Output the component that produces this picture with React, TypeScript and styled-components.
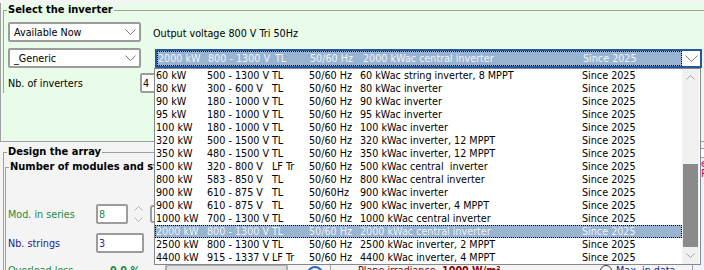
import styled, { createGlobalStyle } from "styled-components";

const GlobalStyle = createGlobalStyle`
    body {
        margin: 0;
        background: #f0f0f0;
        font-family: "DejaVu Sans Condensed", "Liberation Sans", Arial, sans-serif;
        font-size: 10.7px;
        color: #000;
    }
`;

const Screen = styled.div`
    position: relative;
    width: 704px;
    height: 270px;
    overflow: hidden;
    background: #f4f4f4;
`;

const TopPanel = styled.div`
    margin-top: 3px;
    height: 138px;
    padding-left: 2px;
    background: #e9fbe9;
    border-left: 1px solid #a0a0a0;
    border-bottom: 1px solid #a0a0a0;
`;

const Group = styled.fieldset<{ $width?: number }>`
    flex-shrink: 0;
    min-width: 0;
    width: ${(props) => (props.$width ? `${props.$width}px` : "auto")};
    box-sizing: border-box;
    margin: 0;
    padding: 0;
    border: none;
    border-top: 1px solid #a0a0a0;
    border-left: 1px solid #a0a0a0;
`;

const Legend = styled.legend`
    margin-left: 3px;
    padding: 0 1px;
    font-size: 11px;
    line-height: 14px;
    font-weight: bold;
    white-space: nowrap;
`;

const GroupBody = styled.div<{ $pad: string }>`
    padding: ${(props) => props.$pad};
`;

const Row = styled.div<{ $top?: number }>`
    display: flex;
    align-items: flex-start;
    margin-top: ${(props) => props.$top ?? 0}px;
`;

const Combo = styled.div<{ $width: number }>`
    box-sizing: border-box;
    display: flex;
    align-items: center;
    justify-content: space-between;
    width: ${(props) => props.$width}px;
    height: 20px;
    padding: 0 3px 0 4px;
    background: #fff;
    border: 2px solid #9c9c9c;
    border-radius: 2px;
`;

const Caption = styled.span`
    margin: 5px 0 0 12px;
    line-height: 13px;
    white-space: nowrap;
`;

const InverterCombo = styled.div`
    box-sizing: border-box;
    display: flex;
    width: 547px;
    height: 19px;
    margin: 1px 0 0 14px;
    background: #fff;
    border: 2px solid #25579f;
`;

const Selection = styled.div`
    flex: 1;
    box-sizing: border-box;
    background: #99b4d1;
    border: 1px dotted #000;
    color: #eef3f9;
    line-height: 13px;
`;

const ArrowCell = styled.div`
    display: flex;
    align-items: center;
    justify-content: center;
    width: 18px;
`;

const ItemGrid = styled.div<{ $cols: string }>`
    display: grid;
    grid-template-columns: ${(props) => props.$cols};
    white-space: pre;
`;

const FieldRow = styled.div<{ $top?: number; $height?: number; $align?: string }>`
    display: flex;
    align-items: ${(props) => props.$align ?? "center"};
    height: ${(props) => props.$height ?? 20}px;
    margin-top: ${(props) => props.$top ?? 0}px;
`;

const FieldLabel = styled.span<{ $width: number; $color?: string; $bold?: boolean }>`
    flex-shrink: 0;
    width: ${(props) => props.$width}px;
    color: ${(props) => props.$color ?? "#000"};
    font-weight: ${(props) => (props.$bold ? "bold" : "normal")};
    line-height: 13px;
    white-space: nowrap;
`;

const Edit = styled.div<{ $width: number; $color?: string }>`
    box-sizing: border-box;
    display: flex;
    align-items: center;
    flex-shrink: 0;
    width: ${(props) => props.$width}px;
    height: 20px;
    padding-left: 1px;
    color: ${(props) => props.$color ?? "#000"};
    background: #fff;
    border: 2px solid #9c9c9c;
    border-radius: 2px;
`;

const Spinner = styled.div`
    display: flex;
    flex-direction: column;
    align-items: center;
    justify-content: space-between;
    width: 11px;
    height: 16px;
    margin-left: 5px;
`;

const StubBox = styled.div`
    width: 60px;
    height: 14px;
    margin-left: 6px;
    background: #fff;
    border: 2px solid #9c9c9c;
    border-radius: 3px;
`;

const BottomPanel = styled.div`
    display: flex;
    gap: 3px;
    padding: 3px 0 0 3px;
`;

const DesignRow = styled.div`
    display: flex;
`;

const SidePanel = styled.div`
    flex: 1;
    display: flex;
    flex-direction: column;
    justify-content: flex-end;
    margin-left: 3px;
    padding-bottom: 13px;
    border-left: 1px solid #a0a0a0;
`;

const IrradianceRow = styled.div`
    display: flex;
    align-items: flex-start;
    height: 13px;
    padding-left: 27px;
`;

const Radio = styled.span`
    box-sizing: border-box;
    width: 12px;
    height: 12px;
    margin: 1px 4px 0 0;
    background: #fff;
    border: 1px solid #333;
    border-radius: 50%;
`;

const SizeButton = styled.div`
    box-sizing: border-box;
    width: 123px;
    height: 22px;
    background: #e1e1e1;
    border: 2px solid #adadad;
    border-radius: 3px;
`;

const HelpIcon = styled.div`
    box-sizing: border-box;
    width: 16px;
    height: 16px;
    margin: 2px 0 0 19px;
    border: 2px solid #2a64c5;
    border-radius: 50%;
`;

const RightPanel = styled.div`
    flex-shrink: 0;
    width: 200px;
    margin-top: 3px;
    background: #fff;
    border: 1px solid #a0a0a0;
`;

const PanelHead = styled.div`
    height: 8px;
    border-bottom: 1px solid #a0a0a0;
`;

const MessageBox = styled.div`
    height: 120px;
    padding: 1px 0 0 8px;
    background: #eef2fb;
    color: #e8003c;
    line-height: 10px;
    white-space: nowrap;
`;

const DropList = styled.div`
    position: absolute;
    top: 68px;
    left: 154px;
    display: flex;
    box-sizing: border-box;
    width: 547px;
    height: 197px;
    background: #fff;
    border: 1px solid #828790;
`;

const Items = styled.div`
    flex: 1;
`;

const Item = styled(ItemGrid)<{ $selected?: boolean }>`
    height: 13px;
    padding-left: 1px;
    line-height: 13px;
    color: ${(props) => (props.$selected ? "#eef3f9" : "#000")};
    background: ${(props) => (props.$selected ? "#99b4d1" : "transparent")};
    outline: ${(props) => (props.$selected ? "1px dotted #000" : "none")};
    outline-offset: -1px;
`;

const ScrollBar = styled.div`
    display: flex;
    flex-direction: column;
    width: 17px;
    margin-right: 1px;
    background: #f0f0f0;
`;

const ScrollButton = styled.div`
    display: flex;
    align-items: center;
    justify-content: center;
    height: 17px;
`;

const ScrollTrack = styled.div`
    flex: 1;
    display: flex;
    flex-direction: column;
    justify-content: flex-end;
`;

const Thumb = styled.div`
    height: 83px;
    margin: 0 1px;
    background: #8a8a8a;
`;

function Chevron({ width = 11, height = 6, up = false, color = "#7a7a7a" }) {
    const points = up
        ? `0.5,${height - 0.5} ${width / 2},0.5 ${width - 0.5},${height - 0.5}`
        : `0.5,0.5 ${width / 2},${height - 0.5} ${width - 0.5},0.5`;
    return (
        <svg width={width} height={height} viewBox={`0 0 ${width} ${height}`}>
            <polyline points={points} fill="none" stroke={color} strokeWidth="1" />
        </svg>
    );
}

const listCols = "51px 65px 37px 51px 222px 1fr";
const comboCols = "50px 67px 35px 53px 220px 1fr";

const inverters = [
    ["60 kW", "500 - 1300 V", "TL", "50/60 Hz", "60 kWac string inverter, 8 MPPT"],
    ["80 kW", "300 - 600 V", "TL", "50/60 Hz", "80 kWac inverter"],
    ["90 kW", "180 - 1000 V", "TL", "50/60 Hz", "90 kWac inverter"],
    ["95 kW", "180 - 1000 V", "TL", "50/60 Hz", "95 kWac inverter"],
    ["100 kW", "180 - 1000 V", "TL", "50/60 Hz", "100 kWac inverter"],
    ["320 kW", "500 - 1500 V", "TL", "50/60 Hz", "320 kWac inverter, 12 MPPT"],
    ["350 kW", "480 - 1500 V", "TL", "50/60 Hz", "350 kWac inverter, 12 MPPT"],
    ["500 kW", "320 - 800 V", "LF Tr", "50/60 Hz", "500 kWac central  inverter"],
    ["800 kW", "583 - 850 V", "TL", "50/60 Hz", "800 kWac central inverter"],
    ["900 kW", "610 - 875 V", "TL", "50/60Hz", "900 kWac inverter"],
    ["900 kW", "610 - 875 V", "TL", "50/60 Hz", "900 kWac inverter, 4 MPPT"],
    ["1000 kW", "700 - 1300 V", "TL", "50/60 Hz", "1000 kWac central inverter"],
    ["2000 kW", "800 - 1300 V", "TL", "50/60 Hz", "2000 kWac central inverter"],
    ["2500 kW", "800 - 1300 V", "TL", "50/60 Hz", "2500 kWac inverter, 2 MPPT"],
    ["4400 kW", "915 - 1337 V", "LF Tr", "50/60 Hz", "4400 kWac inverter, 4 MPPT"],
];

const selectedIndex = 12;
const since = "Since 2025";

function App() {
    const selected = inverters[selectedIndex];
    return (
        <>
            <GlobalStyle />
            <Screen>
                <TopPanel>
                    <Group>
                        <Legend>Select the inverter</Legend>
                        <GroupBody $pad="5px 0 0 4px">
                            <Row>
                                <Combo $width={133}>
                                    <span>Available Now</span>
                                    <Chevron />
                                </Combo>
                                <Caption>Output voltage 800 V Tri 50Hz</Caption>
                            </Row>
                            <Row $top={6}>
                                <Combo $width={133}>
                                    <span>_Generic</span>
                                    <Chevron />
                                </Combo>
                                <InverterCombo>
                                    <Selection>
                                        <ItemGrid $cols={comboCols}>
                                            {selected.map((cell, i) => (
                                                <span key={i}>{cell}</span>
                                            ))}
                                            <span>{since}</span>
                                        </ItemGrid>
                                    </Selection>
                                    <ArrowCell>
                                        <Chevron width={13} height={7} />
                                    </ArrowCell>
                                </InverterCombo>
                            </Row>
                            <FieldRow $top={5}>
                                <FieldLabel $width={132}>Nb. of inverters</FieldLabel>
                                <Edit $width={40}>4</Edit>
                            </FieldRow>
                        </GroupBody>
                    </Group>
                </TopPanel>

                <BottomPanel>
                    <Group $width={686}>
                        <Legend>Design the array</Legend>
                        <GroupBody $pad="1px 0 0 1px">
                            <DesignRow>
                                <Group $width={322}>
                                    <Legend>Number of modules and strings</Legend>
                                    <GroupBody $pad="30px 0 0 2px">
                                        <FieldRow>
                                            <FieldLabel $width={88} $color="#1f8a3b">
                                                Mod. in series
                                            </FieldLabel>
                                            <Edit $width={32} $color="#1f8a3b">
                                                8
                                            </Edit>
                                            <Spinner>
                                                <Chevron width={9} height={5} up color="#b4b4b4" />
                                                <Chevron width={9} height={5} color="#b4b4b4" />
                                            </Spinner>
                                            <StubBox />
                                        </FieldRow>
                                        <FieldRow $top={9}>
                                            <FieldLabel $width={88} $color="#1b1b8f">
                                                Nb. strings
                                            </FieldLabel>
                                            <Edit $width={48} $color="#3a17a8">
                                                3
                                            </Edit>
                                        </FieldRow>
                                        <FieldRow $top={11} $height={26} $align="flex-start">
                                            <FieldLabel $width={102} $color="#1f8a3b">
                                                Overload loss
                                            </FieldLabel>
                                            <FieldLabel $width={55} $color="#1f8a3b" $bold>
                                                0.0 %
                                            </FieldLabel>
                                            <SizeButton />
                                            <HelpIcon />
                                        </FieldRow>
                                    </GroupBody>
                                </Group>
                                <SidePanel>
                                    <IrradianceRow>
                                        <FieldLabel $width={84} $color="#7a0012">
                                            Plane irradiance
                                        </FieldLabel>
                                        <FieldLabel $width={158} $color="#8b0000" $bold>
                                            1000 W/m²
                                        </FieldLabel>
                                        <Radio />
                                        <FieldLabel $width={80} $color="#0b2a8a">
                                            Max. in data
                                        </FieldLabel>
                                    </IrradianceRow>
                                </SidePanel>
                            </DesignRow>
                        </GroupBody>
                    </Group>
                    <RightPanel>
                        <PanelHead />
                        <MessageBox>
                            <div>error in inverter sizing</div>
                            <div>Pnom ratio too high</div>
                        </MessageBox>
                    </RightPanel>
                </BottomPanel>

                <DropList>
                    <Items>
                        {inverters.map((inv, index) => (
                            <Item key={index} $cols={listCols} $selected={index === selectedIndex}>
                                {inv.map((cell, i) => (
                                    <span key={i}>{cell}</span>
                                ))}
                                <span>{since}</span>
                            </Item>
                        ))}
                    </Items>
                    <ScrollBar>
                        <ScrollButton>
                            <Chevron width={9} height={5} up color="#a6a6a6" />
                        </ScrollButton>
                        <ScrollTrack>
                            <Thumb />
                        </ScrollTrack>
                        <ScrollButton>
                            <Chevron width={9} height={5} color="#a6a6a6" />
                        </ScrollButton>
                    </ScrollBar>
                </DropList>
            </Screen>
        </>
    );
}

export default App;
